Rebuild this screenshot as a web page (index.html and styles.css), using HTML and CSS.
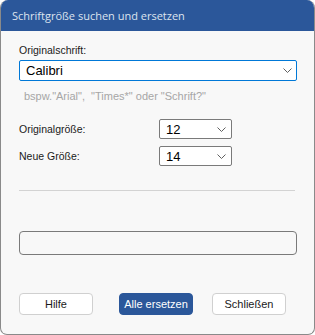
FILE: index.html
```html
<!DOCTYPE html>
<html lang="de">
<head>
    <meta charset="UTF-8">
    <title>Schriftgröße suchen und ersetzen</title>
    <link rel="stylesheet" href="styles.css">
</head>
<body>
    <div class="window">
        <div class="titlebar">Schriftgröße suchen und ersetzen</div>
        <div class="content">
            <label class="label">Originalschrift:</label>
            <div class="combo focused">
                <span>Calibri</span>
                <svg class="chev" width="9" height="5" viewBox="0 0 9 5"><path d="M0.5 0.5 L4.5 4.5 L8.5 0.5" fill="none" stroke="#606060" stroke-width="1"/></svg>
            </div>
            <div class="hint">bspw."Arial",&nbsp; "Times*" oder "Schrift?"</div>

            <div class="row first">
                <label class="row-label">Originalgröße:</label>
                <div class="combo small">
                    <span>12</span>
                    <svg class="chev" width="9" height="5" viewBox="0 0 9 5"><path d="M0.5 0.5 L4.5 4.5 L8.5 0.5" fill="none" stroke="#606060" stroke-width="1"/></svg>
                </div>
            </div>
            <div class="row">
                <label class="row-label">Neue Größe:</label>
                <div class="combo small">
                    <span>14</span>
                    <svg class="chev" width="9" height="5" viewBox="0 0 9 5"><path d="M0.5 0.5 L4.5 4.5 L8.5 0.5" fill="none" stroke="#606060" stroke-width="1"/></svg>
                </div>
            </div>

            <div class="divider"></div>
            <div class="progress"></div>

            <div class="buttons">
                <button class="btn">Hilfe</button>
                <button class="btn primary">Alle ersetzen</button>
                <button class="btn last">Schließen</button>
            </div>
        </div>
    </div>
</body>
</html>
```
FILE: styles.css
```css
body { margin: 0; background: #fff; font-family: 'Liberation Sans', Arial, sans-serif; }
.window { width: 315px; height: 335px; box-sizing: border-box; border: 1px solid #8a8a8a; border-top: none; border-radius: 8px 8px 7px 7px; background: #f8f8f8; overflow: hidden; }
.titlebar { height: 31px; background: #2b579a; color: #dde4ef; font-family: 'Open Sans', sans-serif; font-size: 11px; line-height: 31px; padding-left: 11px; }
.content { padding: 0 17px 0 18px; display: flex; flex-direction: column; }
.label { margin-top: 12px; font-size: 10.5px; line-height: 14px; color: #1a1a1a; }
.combo { margin-top: 3px; height: 21px; box-sizing: border-box; border: 1px solid #7a7a7a; border-radius: 2px; background: #fff; display: flex; align-items: center; justify-content: space-between; padding: 0 4px 0 6px; font-size: 13px; color: #000; }
.combo.focused { border-color: #0078d7; }
.hint { margin-top: 8px; padding-left: 5px; font-size: 11px; line-height: 14px; color: #a6a6a6; }
.row { display: flex; align-items: center; margin-top: 7px; }
.row.first { margin-top: 16px; }
.row-label { width: 140px; font-size: 10.5px; color: #1a1a1a; }
.combo.small { margin-top: 0; width: 73px; height: 20px; padding-right: 5px; }
.divider { margin-top: 24px; height: 1px; background: #d3d3d3; margin-right: 2px; }
.progress { margin-top: 40px; height: 24px; box-sizing: border-box; border: 1px solid #7a7a7a; border-radius: 4px; }
.buttons { display: flex; margin-top: 38px; }
.btn { width: 74px; height: 22px; box-sizing: border-box; border: 1px solid #d0d0d0; border-radius: 4px; background: #fff; color: #1a1a1a; font-family: 'Liberation Sans', Arial, sans-serif; font-size: 11px; padding: 0; }
.btn.primary { margin-left: 26px; background: #2b579a; border-color: #2b579a; color: #fff; }
.btn.last { margin-left: 19px; }
```
